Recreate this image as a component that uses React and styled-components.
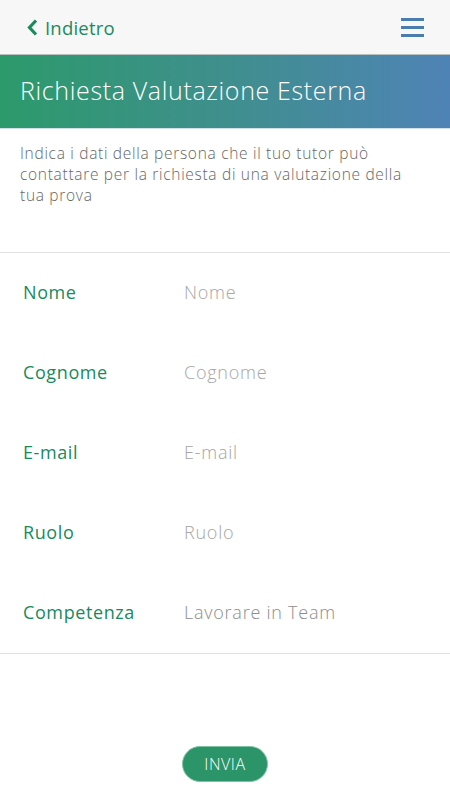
import React from "react";
import styled, { createGlobalStyle } from "styled-components";

const Global = createGlobalStyle`
  html, body { margin: 0; padding: 0; background: #ffffff; }
  body { font-family: "Open Sans", "Noto Sans", sans-serif; }
  * { box-sizing: border-box; }
`;

const Page = styled.div`
  width: 450px;
  min-height: 800px;
  display: flex;
  flex-direction: column;
  background: #fff;
`;

const TopBar = styled.header`
  height: 55px;
  background: #f7f7f7;
  border-bottom: 1px solid #b9bfbd;
  display: flex;
  align-items: center;
  justify-content: space-between;
  padding: 0 26px 0 27px;
`;

const Back = styled.a`
  display: flex;
  align-items: center;
  gap: 7px;
  color: #1b8a5d;
  font-size: 18.5px;
  font-weight: 400;
  letter-spacing: 0.2px;
  text-decoration: none;
`;

const Burger = styled.div`
  width: 23px;
  display: flex;
  flex-direction: column;
  gap: 5px;
`;

const Bar = styled.span`
  display: block;
  height: 3px;
  background: #4a7cae;
`;

const Banner = styled.div`
  height: 74px;
  background: linear-gradient(90deg, #2c9a6b 0%, #3f8f8d 50%, #4f83b6 100%);
  display: flex;
  align-items: center;
  padding: 0 20px 3px;
  border-bottom: 1px solid #cfe0e8;
`;

const Title = styled.h1`
  margin: 0;
  color: #fff;
  font-size: 25px;
  font-weight: 300;
  letter-spacing: 0.65px;
`;

const Intro = styled.p`
  margin: 0;
  padding: 14px 20px 0 20px;
  height: 124px;
  color: #666;
  font-size: 15.5px;
  font-weight: 300;
  letter-spacing: 0.7px;
  line-height: 21px;
  border-bottom: 1px solid #e2e2e2;
`;

const Form = styled.div`
  display: flex;
  flex-direction: column;
  border-bottom: 1px solid #e2e2e2;
`;

const Row = styled.div`
  height: 80px;
  display: grid;
  grid-template-columns: 161px 1fr;
  align-items: center;
  padding-left: 23px;
  padding-bottom: 3px;
`;

const Label = styled.label`
  color: #178a5c;
  font-size: 18px;
  font-weight: 500;
  letter-spacing: 0.6px;
`;

const Value = styled.span`
  color: ${(p) => (p.filled ? "#8d8d8d" : "#a6a6a6")};
  font-size: 18px;
  font-weight: 300;
  letter-spacing: 0.75px;
`;

const Footer = styled.div`
  display: flex;
  justify-content: center;
  padding-top: 92px;
`;

const Button = styled.button`
  width: 86px;
  height: 36px;
  border-radius: 18px;
  background: #2b9468;
  border: 1px solid #7fc3a4;
  color: #fff;
  font-family: inherit;
  font-size: 16px;
  font-weight: 300;
  letter-spacing: 0.6px;
`;

const rows = [
  ["Nome", "Nome", false],
  ["Cognome", "Cognome", false],
  ["E-mail", "E-mail", false],
  ["Ruolo", "Ruolo", false],
  ["Competenza", "Lavorare in Team", true],
];

export default function App() {
  return (
    <Page>
      <Global />
      <TopBar>
        <Back>
          <svg width="11" height="17" viewBox="0 0 11 17">
            <path d="M9 1.5 L2.5 8.5 L9 15.5" fill="none" stroke="#1b8a5d" strokeWidth="3.2" />
          </svg>
          Indietro
        </Back>
        <Burger>
          <Bar />
          <Bar />
          <Bar />
        </Burger>
      </TopBar>
      <Banner>
        <Title>Richiesta Valutazione Esterna</Title>
      </Banner>
      <Intro>
        Indica i dati della persona che il tuo tutor può contattare per la richiesta di una valutazione della tua prova
      </Intro>
      <Form>
        {rows.map(([l, v, f]) => (
          <Row key={l}>
            <Label>{l}</Label>
            <Value filled={f}>{v}</Value>
          </Row>
        ))}
      </Form>
      <Footer>
        <Button>INVIA</Button>
      </Footer>
    </Page>
  );
}
